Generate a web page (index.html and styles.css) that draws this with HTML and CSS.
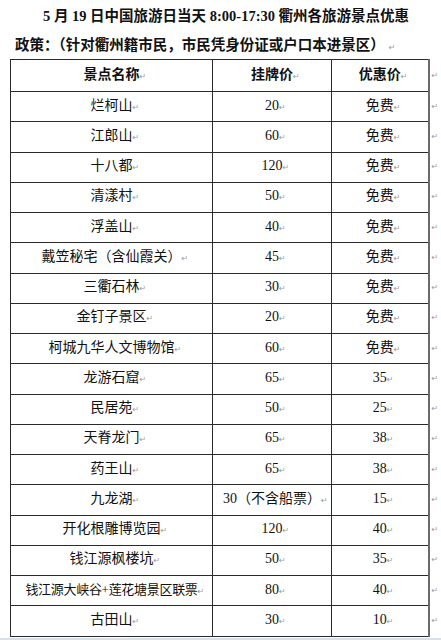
FILE: index.html
```html
<!DOCTYPE html>
<html lang="zh-CN">
<head>
<meta charset="utf-8">
<title>衢州各旅游景点优惠</title>
<link rel="stylesheet" href="styles.css">
</head>
<body>
<div class="title">5 月 19 日中国旅游日当天 8:00-17:30 衢州各旅游景点优惠</div>
<div class="policy">政策：（针对衢州籍市民，市民凭身份证或户口本进景区）<span class="pm">↵</span></div>
<table class="tbl">
<colgroup><col class="c1"><col class="c2"><col class="c3"><col class="c4"></colgroup>
<tr class="head"><td>景点名称<span class="pm">↵</span></td><td>挂牌价<span class="pm">↵</span></td><td>优惠价<span class="pm">↵</span></td><td class="end">↵</td></tr>
<tr><td>烂柯山<span class="pm">↵</span></td><td>20<span class="pm">↵</span></td><td>免费<span class="pm">↵</span></td><td class="end">↵</td></tr>
<tr><td>江郎山<span class="pm">↵</span></td><td>60<span class="pm">↵</span></td><td>免费<span class="pm">↵</span></td><td class="end">↵</td></tr>
<tr><td>十八都<span class="pm">↵</span></td><td>120<span class="pm">↵</span></td><td>免费<span class="pm">↵</span></td><td class="end">↵</td></tr>
<tr><td>清漾村<span class="pm">↵</span></td><td>50<span class="pm">↵</span></td><td>免费<span class="pm">↵</span></td><td class="end">↵</td></tr>
<tr><td>浮盖山<span class="pm">↵</span></td><td>40<span class="pm">↵</span></td><td>免费<span class="pm">↵</span></td><td class="end">↵</td></tr>
<tr><td>戴笠秘宅（含仙霞关）<span class="pm">↵</span></td><td>45<span class="pm">↵</span></td><td>免费<span class="pm">↵</span></td><td class="end">↵</td></tr>
<tr><td>三衢石林<span class="pm">↵</span></td><td>30<span class="pm">↵</span></td><td>免费<span class="pm">↵</span></td><td class="end">↵</td></tr>
<tr><td>金钉子景区<span class="pm">↵</span></td><td>20<span class="pm">↵</span></td><td>免费<span class="pm">↵</span></td><td class="end">↵</td></tr>
<tr><td>柯城九华人文博物馆<span class="pm">↵</span></td><td>60<span class="pm">↵</span></td><td>免费<span class="pm">↵</span></td><td class="end">↵</td></tr>
<tr><td>龙游石窟<span class="pm">↵</span></td><td>65<span class="pm">↵</span></td><td>35<span class="pm">↵</span></td><td class="end">↵</td></tr>
<tr><td>民居苑<span class="pm">↵</span></td><td>50<span class="pm">↵</span></td><td>25<span class="pm">↵</span></td><td class="end">↵</td></tr>
<tr><td>天脊龙门<span class="pm">↵</span></td><td>65<span class="pm">↵</span></td><td>38<span class="pm">↵</span></td><td class="end">↵</td></tr>
<tr><td>药王山<span class="pm">↵</span></td><td>65<span class="pm">↵</span></td><td>38<span class="pm">↵</span></td><td class="end">↵</td></tr>
<tr><td>九龙湖<span class="pm">↵</span></td><td>30（不含船票）<span class="pm">↵</span></td><td>15<span class="pm">↵</span></td><td class="end">↵</td></tr>
<tr><td>开化根雕博览园<span class="pm">↵</span></td><td>120<span class="pm">↵</span></td><td>40<span class="pm">↵</span></td><td class="end">↵</td></tr>
<tr><td>钱江源枫楼坑<span class="pm">↵</span></td><td>50<span class="pm">↵</span></td><td>35<span class="pm">↵</span></td><td class="end">↵</td></tr>
<tr><td class="long">钱江源大峡谷+莲花塘景区联票<span class="pm">↵</span></td><td>80<span class="pm">↵</span></td><td>40<span class="pm">↵</span></td><td class="end">↵</td></tr>
<tr><td>古田山<span class="pm">↵</span></td><td>30<span class="pm">↵</span></td><td>10<span class="pm">↵</span></td><td class="end">↵</td></tr>
</table>
<div class="band"></div>
</body>
</html>
```
FILE: styles.css
```css
html, body {
  margin: 0;
  padding: 0;
  background: #ffffff;
}
body {
  width: 441px;
  height: 640px;
  overflow: hidden;
  font-family: "Liberation Serif", "Noto Sans CJK SC", serif;
  color: #111111;
}
.title {
  height: 31px;
  line-height: 32px;
  padding-left: 43px;
  font-size: 14.5px;
  font-weight: 700;
  white-space: nowrap;
}
.policy {
  height: 28px;
  line-height: 28px;
  padding-left: 15px;
  font-size: 14.5px;
  font-weight: 700;
  white-space: nowrap;
}
.pm {
  display: inline-block;
  width: 0;
  font-family: "DejaVu Sans", sans-serif;
  font-size: 8px;
  font-weight: 400;
  color: #9a9a9a;
  white-space: nowrap;
  vertical-align: baseline;
}
.policy .pm {
  margin-left: 4px;
}
.tbl {
  margin-left: 10px;
  border-collapse: collapse;
  table-layout: fixed;
  width: 432px;
}
.c1 { width: 202px; }
.c2 { width: 119px; }
.c3 { width: 97px; }
.c4 { width: 14px; }
.tbl td {
  border: 1px solid #2a2a2a;
  padding: 0;
  height: 29.25px;
  text-align: center;
  vertical-align: middle;
  font-size: 14px;
  line-height: 16px;
  white-space: nowrap;
}
.tbl td:nth-child(3) {
  border-right: 2px solid #6a6a6a;
}
.tbl td.end {
  border: none;
  text-align: left;
  padding-left: 2px;
  font-family: "DejaVu Sans", sans-serif;
  font-size: 8px;
  color: #9a9a9a;
}
.tbl .head td {
  height: 31px;
  font-weight: 700;
}
.tbl .head td.end {
  font-weight: 400;
}
.tbl td.long {
  font-size: 13px;
  letter-spacing: -0.3px;
}
.band {
  margin-top: 1px;
  height: 6px;
  background: #d9e0ea;
}
```
